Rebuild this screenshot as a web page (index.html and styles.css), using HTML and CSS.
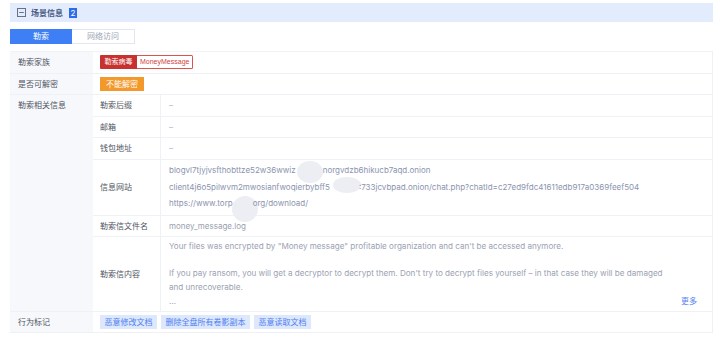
FILE: index.html
```html
<!DOCTYPE html>
<html lang="zh">
<head>
<meta charset="utf-8">
<title>场景信息</title>
<link rel="stylesheet" href="styles.css">
</head>
<body>
<div class="panel">
  <div class="section-head">
    <svg class="collapse-icon" width="9" height="9" viewBox="0 0 9 9"><rect x="0.5" y="0.5" width="8" height="8" fill="none" stroke="#67718a" stroke-width="1"/><line x1="2.2" y1="4.5" x2="6.8" y2="4.5" stroke="#67718a" stroke-width="1"/></svg>
    <span class="section-title">场景信息</span>
    <span class="count">2</span>
  </div>

  <div class="tabs">
    <div class="tab active">勒索</div>
    <div class="tab">网络访问</div>
  </div>

  <div class="table">
    <div class="row">
      <div class="label">勒索家族</div>
      <div class="value">
        <span class="family"><span class="family-type">勒索病毒</span><span class="family-name">MoneyMessage</span></span>
      </div>
    </div>
    <div class="row">
      <div class="label">是否可解密</div>
      <div class="value"><span class="decrypt">不能解密</span></div>
    </div>
    <div class="row">
      <div class="label">勒索相关信息</div>
      <div class="nested">
        <div class="subrow">
          <div class="sublabel">勒索后缀</div>
          <div class="subvalue dash">–</div>
        </div>
        <div class="subrow">
          <div class="sublabel">邮箱</div>
          <div class="subvalue dash">–</div>
        </div>
        <div class="subrow">
          <div class="sublabel">钱包地址</div>
          <div class="subvalue dash">–</div>
        </div>
        <div class="subrow">
          <div class="sublabel middle">信息网站</div>
          <div class="subvalue sites">
            <span class="blot blot1"></span>
            <span class="blot blot2"></span>
            <span class="blot blot3"></span>
            <div class="site">blogvl7tjyjvsfthobttze52w36wwiz<span class="gap gap1"></span>norgvdzb6hikucb7aqd.onion</div>
            <div class="site">client4j6o5pilwvm2mwosianfwoqierbybff5<span class="gap gap2"></span>:733jcvbpad.onion/chat.php?chatId=c27ed9fdc41611edb917a0369feef504</div>
            <div class="site">https://www.torp<span class="gap gap3"></span>org/download/</div>
          </div>
        </div>
        <div class="subrow">
          <div class="sublabel">勒索信文件名</div>
          <div class="subvalue plain">money_message.log</div>
        </div>
        <div class="subrow last">
          <div class="sublabel middle">勒索信内容</div>
          <div class="subvalue note">
            <p class="note-line">Your files was encrypted by "Money message" profitable organization and can't be accessed anymore.</p>
            <p class="note-line">&nbsp;</p>
            <p class="note-line">If you pay ransom, you will get a decryptor to decrypt them. Don't try to decrypt files yourself – in that case they will be damaged and unrecoverable.</p>
            <div class="note-foot"><span>…</span><a class="more">更多</a></div>
          </div>
        </div>
      </div>
    </div>
    <div class="row">
      <div class="label">行为标记</div>
      <div class="value tags">
        <span class="tag">恶意修改文档</span>
        <span class="tag">删除全盘所有卷影副本</span>
        <span class="tag">恶意读取文档</span>
      </div>
    </div>
  </div>
</div>
</body>
</html>
```

FILE: styles.css
```css
* { box-sizing: border-box; }

html, body {
  margin: 0;
  padding: 0;
  background: #ffffff;
}

body {
  font-family: Inter, "Noto Sans CJK SC", sans-serif;
  font-size: 8px;
  color: #4d5260;
}

.panel {
  width: 703px;
  margin: 3px 0 0 10px;
}

.section-head {
  height: 19px;
  background: #e3ecfd;
  display: flex;
  align-items: center;
  padding-left: 7px;
}

.collapse-icon {
  display: block;
  margin-right: 5px;
}

.section-title {
  font-weight: 700;
  color: #4b5b85;
  font-size: 8px;
  line-height: 10px;
}

.count {
  margin-left: 6px;
  background: #2e6bea;
  color: #ffffff;
  font-size: 8px;
  line-height: 10px;
  padding: 0 1.5px;
  min-width: 7px;
  text-align: center;
}

.tabs {
  display: flex;
  margin-top: 7px;
}

.tab {
  height: 15px;
  line-height: 13px;
  text-align: center;
  font-size: 8px;
  border: 1px solid #e0e7f3;
  color: #9ea6b6;
}

.tab:first-child { width: 62px; }
.tab:last-child { width: 63px; border-left: none; }

.tab.active {
  background: #3e7ff6;
  border-color: #3e7ff6;
  color: #ffffff;
}

.table {
  margin-top: 7px;
  border-top: 1px solid #eff2f7;
  border-right: 1px solid #eef1f6;
}

.row {
  display: flex;
  border-bottom: 1px solid #eef1f6;
}

.label {
  width: 83px;
  flex: none;
  background: #f6f8fb;
  padding: 4px 0 4px 8px;
  line-height: 12.5px;
  color: #4f5462;
}

.value {
  flex: 1;
  display: flex;
  align-items: center;
  padding: 0 7px;
}

.family {
  display: flex;
  height: 14px;
  font-size: 7px;
  font-family: "Liberation Sans", "Noto Sans CJK SC", sans-serif;
}

.family-type {
  background: #c7312f;
  color: #ffffff;
  padding: 0 4.5px;
  line-height: 14px;
  border-radius: 1px 0 0 1px;
}

.family-name {
  border: 1px solid #d9534f;
  border-left: none;
  color: #d23f3f;
  padding: 0 3px;
  line-height: 12px;
  border-radius: 0 1.5px 1.5px 0;
}

.decrypt {
  background: #f3982a;
  color: #ffffff;
  height: 14px;
  line-height: 14px;
  padding: 0 6px;
  font-size: 8px;
}

.nested {
  flex: 1;
}

.subrow {
  display: flex;
  border-bottom: 1px solid #eef1f6;
}

.subrow.last { border-bottom: none; }

.sublabel {
  width: 68px;
  flex: none;
  padding: 4px 0 4px 7px;
  line-height: 12.5px;
  border-right: 1px solid #eef1f6;
  color: #4f5462;
}

.sublabel.middle {
  display: flex;
  align-items: center;
}

.subvalue {
  flex: 1;
  padding: 4px 15px 4px 8px;
  line-height: 12.5px;
  color: #a3a9b7;
}

.subvalue.dash { color: #b0b5c1; }

.subvalue.plain { color: #9aa0ae; }

.sites {
  position: relative;
  padding-top: 2.5px;
  padding-bottom: 3px;
  color: #8b94ae;
}

.site {
  position: relative;
  line-height: 16.5px;
  white-space: nowrap;
}

.gap {
  display: inline-block;
  height: 1px;
}
.gap1 { width: 27px; }
.gap2 { width: 29px; }
.gap3 { width: 20px; }

.blot {
  position: absolute;
  background: #eceef3;
  border-radius: 50%;
  filter: blur(0.6px);
}
.blot1 { left: 136px; top: 1px; width: 26px; height: 22px; }
.blot2 { left: 172px; top: 17px; width: 28px; height: 16px; }
.blot3 { left: 71px; top: 36px; width: 26px; height: 26px; }

.note {
  padding-top: 3px;
  padding-bottom: 2px;
  color: #9ba2b2;
  font-size: 8.1px;
}

.note-line {
  margin: 0;
  line-height: 13.7px;
  padding-right: 21px;
}

.note-foot {
  display: flex;
  justify-content: space-between;
  line-height: 13.7px;
}

.more {
  color: #5a86f5;
  cursor: pointer;
  font-size: 8px;
}

.tags {
  gap: 4px;
}

.tag {
  background: #dde8fd;
  color: #4f7ef0;
  height: 14px;
  line-height: 14px;
  padding: 0 4.5px;
  font-size: 8px;
}
```
